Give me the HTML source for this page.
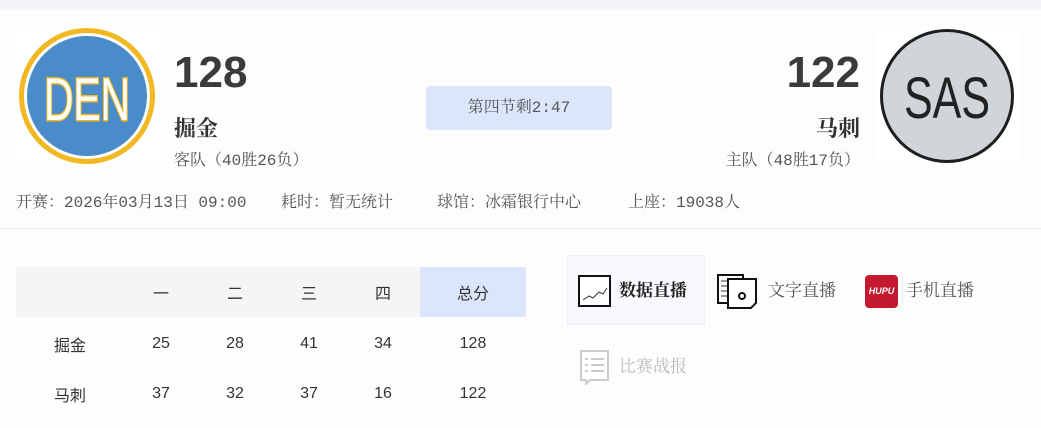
<!DOCTYPE html>
<html><head><meta charset="utf-8"><style>
body{margin:0;width:1041px;height:428px;background:#fdfdfe;position:relative;overflow:hidden;font-family:"Liberation Serif","Noto Serif CJK SC",serif;color:#333}
.a{position:absolute;white-space:nowrap}
.top{left:0;top:0;width:1041px;height:10px;background:#f4f5f8}
.score{font-family:"Liberation Sans",sans-serif;font-weight:bold;font-size:44px;color:#3a3a3a}
.name{font-size:22px;font-weight:bold;color:#333}
.sub{font-size:16px;color:#555;font-family:"Liberation Mono","Noto Serif CJK SC",monospace}
.info{font-size:16px;color:#555;top:189px;font-family:"Liberation Mono","Noto Serif CJK SC",monospace}
td{text-align:center;font-family:"Liberation Sans","Noto Sans CJK SC",sans-serif;font-size:16px;color:#333;height:50px;padding:0}
tr.d td{height:47px;padding-top:3px}
.lk{font-size:17px;color:#555}
</style></head><body>
<div class="a top"></div>
<div class="a" style="left:16px;top:26px;width:144px;height:140px;background:#fff"></div>
<svg class="a" style="left:16px;top:26px" width="144" height="140"><circle cx="71" cy="70" r="68" fill="#f2b822"/><circle cx="71" cy="70" r="63" fill="#fff"/><circle cx="71" cy="70" r="60" fill="#4a8bc9"/><text x="28" y="94" textLength="86" lengthAdjust="spacingAndGlyphs" font-family="Liberation Sans,sans-serif" font-size="60" fill="#fff" stroke="#f2b822" stroke-width="3" paint-order="stroke">DEN</text></svg>
<div class="a score" style="left:174px;top:48px">128</div>
<div class="a name" style="left:174px;top:112px">掘金</div>
<div class="a sub" style="left:174px;top:147px">客队（40胜26负）</div>
<div class="a" style="left:426px;top:86px;width:186px;height:44px;background:#dce6fb;border-radius:4px;text-align:center;line-height:44px;font-size:16px;color:#555;font-family:'Liberation Mono','Noto Serif CJK SC',monospace">第四节剩2:47</div>
<div class="a score" style="right:181px;top:48px">122</div>
<div class="a name" style="right:181px;top:112px">马刺</div>
<div class="a sub" style="right:181px;top:147px">主队（48胜17负）</div>
<div class="a" style="left:877px;top:26px;width:142px;height:140px;background:#fff"></div>
<svg class="a" style="left:877px;top:26px" width="142" height="140"><circle cx="70" cy="70" r="67" fill="#1e1e1e"/><circle cx="70" cy="70" r="64" fill="#d0d5da"/><text x="27" y="92" textLength="86" lengthAdjust="spacingAndGlyphs" font-family="Liberation Sans,sans-serif" font-size="58" fill="#222">SAS</text></svg>
<div class="a info" style="left:16px">开赛：2026年03月13日 09:00</div>
<div class="a info" style="left:281px">耗时：暂无统计</div>
<div class="a info" style="left:437px">球馆：冰霜银行中心</div>
<div class="a info" style="left:628px">上座：19038人</div>
<div class="a" style="left:0;top:228px;width:1041px;height:1px;background:#eee"></div>
<table class="a" style="left:16px;top:267px;border-collapse:collapse;width:510px">
<tr style="background:#f5f5f5"><td style="width:108px"></td><td style="width:74px">一</td><td style="width:74px">二</td><td style="width:74px">三</td><td style="width:74px">四</td><td style="background:#dce6fb">总分</td></tr>
<tr class="d"><td>掘金</td><td>25</td><td>28</td><td>41</td><td>34</td><td>128</td></tr>
<tr class="d"><td>马刺</td><td>37</td><td>32</td><td>37</td><td>16</td><td>122</td></tr>
</table>
<div class="a" style="left:567px;top:255px;width:136px;height:68px;background:#f7f9fc;border:1px solid #eef0f3"></div>
<svg class="a" style="left:578px;top:275px" width="33" height="32"><rect x="1" y="1" width="31" height="30" fill="#fff" stroke="#111" stroke-width="2"/><polyline points="5,25 11,21 15,23 21,17 25,19 29,13" fill="none" stroke="#333"/></svg>
<div class="a lk" style="left:619px;top:276px;font-weight:bold;color:#222">数据直播</div>
<svg class="a" style="left:717px;top:274px" width="44" height="36"><rect x="1" y="1" width="25" height="28" fill="#fff" stroke="#111" stroke-width="2"/><path d="M4 7h8M4 12h8M4 17h8M4 22h8" stroke="#333"/><path d="M11 5h28v24l-5 5H11z" fill="#fff" stroke="#111" stroke-width="2"/><circle cx="25" cy="22" r="3" fill="none" stroke="#111" stroke-width="2"/></svg>
<div class="a lk" style="left:768px;top:276px">文字直播</div>
<div class="a" style="left:865px;top:275px;width:33px;height:33px;background:#c41a30;border-radius:4px;color:#fff;font:italic bold 9px 'Liberation Sans',sans-serif;text-align:center;line-height:33px">HUPU</div>
<div class="a lk" style="left:906px;top:276px">手机直播</div>
<svg class="a" style="left:580px;top:350px" width="30" height="35"><path d="M1 1h27v29H10l-4 4v-4H1z" fill="#fff" stroke="#ccc" stroke-width="2"/><path d="M5 9h3M11 9h13M5 15h3M11 15h13M5 21h3M11 21h13" stroke="#ccc" stroke-width="2"/></svg>
<div class="a lk" style="left:619px;top:352px;color:#bbb">比赛战报</div>
</body></html>
